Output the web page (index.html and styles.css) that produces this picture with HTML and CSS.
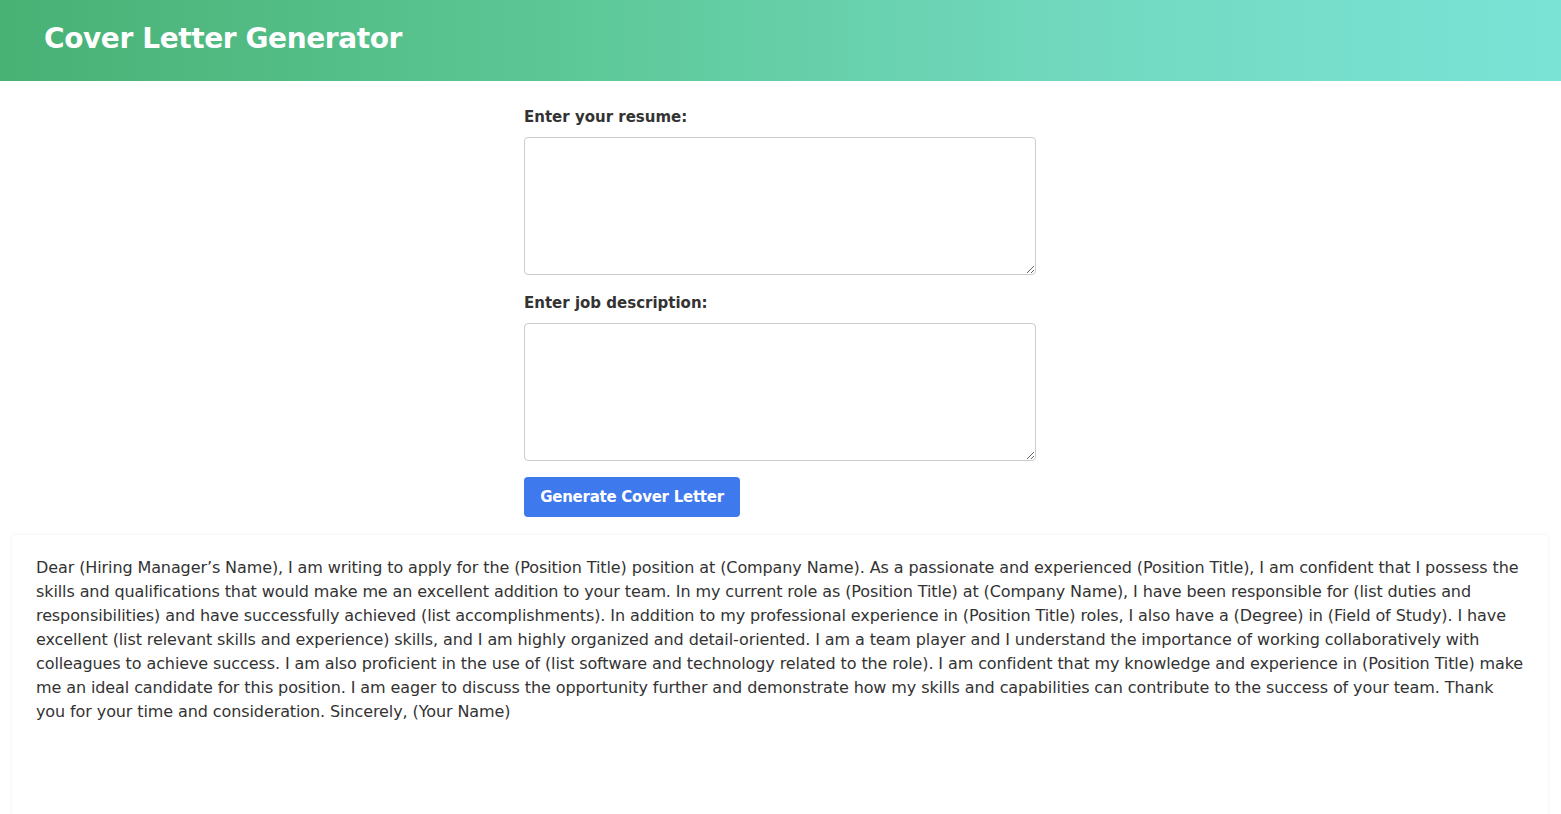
FILE: index.html
```html
<!DOCTYPE html>
<html lang="en">
<head>
<meta charset="utf-8">
<title>Cover Letter Generator</title>
<link rel="stylesheet" href="styles.css">
</head>
<body>
<header class="header">
  <h1 class="title">Cover Letter Generator</h1>
</header>
<main class="main">
  <form class="form">
    <label class="label" for="resume">Enter your resume:</label>
    <textarea class="field" id="resume"></textarea>
    <label class="label" for="job">Enter job description:</label>
    <textarea class="field" id="job"></textarea>
    <button type="button" class="btn">Generate Cover Letter</button>
  </form>
  <section class="output">
    <p class="letter">Dear (Hiring Manager’s Name), I am writing to apply for the (Position Title) position at (Company Name). As a passionate and experienced (Position Title), I am confident that I possess the skills and qualifications that would make me an excellent addition to your team. In my current role as (Position Title) at (Company Name), I have been responsible for (list duties and responsibilities) and have successfully achieved (list accomplishments). In addition to my professional experience in (Position Title) roles, I also have a (Degree) in (Field of Study). I have excellent (list relevant skills and experience) skills, and I am highly organized and detail-oriented. I am a team player and I understand the importance of working collaboratively with colleagues to achieve success. I am also proficient in the use of (list software and technology related to the role). I am confident that my knowledge and experience in (Position Title) make me an ideal candidate for this position. I am eager to discuss the opportunity further and demonstrate how my skills and capabilities can contribute to the success of your team. Thank you for your time and consideration. Sincerely, (Your Name)</p>
  </section>
</main>
</body>
</html>
```
FILE: styles.css
```css
* { box-sizing: border-box; }
html, body { margin: 0; padding: 0; }
body {
  font-family: "DejaVu Sans", "Noto Sans", sans-serif;
  color: #333;
  background: #fff;
  overflow: hidden;
}
.header {
  height: 81px;
  display: flex;
  align-items: center;
  padding: 0 44px 5px;
  background: linear-gradient(90deg, #48b174 0%, #5cc795 35%, #72d9c0 70%, #7ae3d6 100%);
}
.title {
  margin: 0;
  color: #fff;
  font-size: 28px;
  font-weight: 700;
  letter-spacing: -0.4px;
}
.main {
  display: flex;
  flex-direction: column;
  align-items: center;
  padding-right: 1px;
}
.form {
  width: 512px;
  display: flex;
  flex-direction: column;
  align-items: flex-start;
  padding-top: 26px;
}
.label {
  font-size: 15px;
  font-weight: 700;
  color: #333;
  line-height: 20px;
  margin-bottom: 10px;
}
.field {
  width: 512px;
  height: 138px;
  border: 1px solid #ccc;
  border-radius: 4px;
  margin: 0 0 18px;
  font-family: inherit;
  resize: vertical;
}
.btn {
  margin-top: -2px;
  width: 216px;
  height: 40px;
  border: none;
  border-radius: 4px;
  background: #3f79ee;
  color: #fff;
  font-family: inherit;
  font-size: 15px;
  font-weight: 700;
  letter-spacing: -0.25px;
}
.output {
  align-self: stretch;
  margin: 18px 12px 0 12px;
  height: 300px;
  padding: 21px 24px;
  background: #fff;
  box-shadow: 0 0 3px rgba(0,0,0,0.08);
}
.letter {
  margin: 0;
  font-size: 16px;
  line-height: 24px;
  color: #333;
  letter-spacing: -0.1px;
}
```
